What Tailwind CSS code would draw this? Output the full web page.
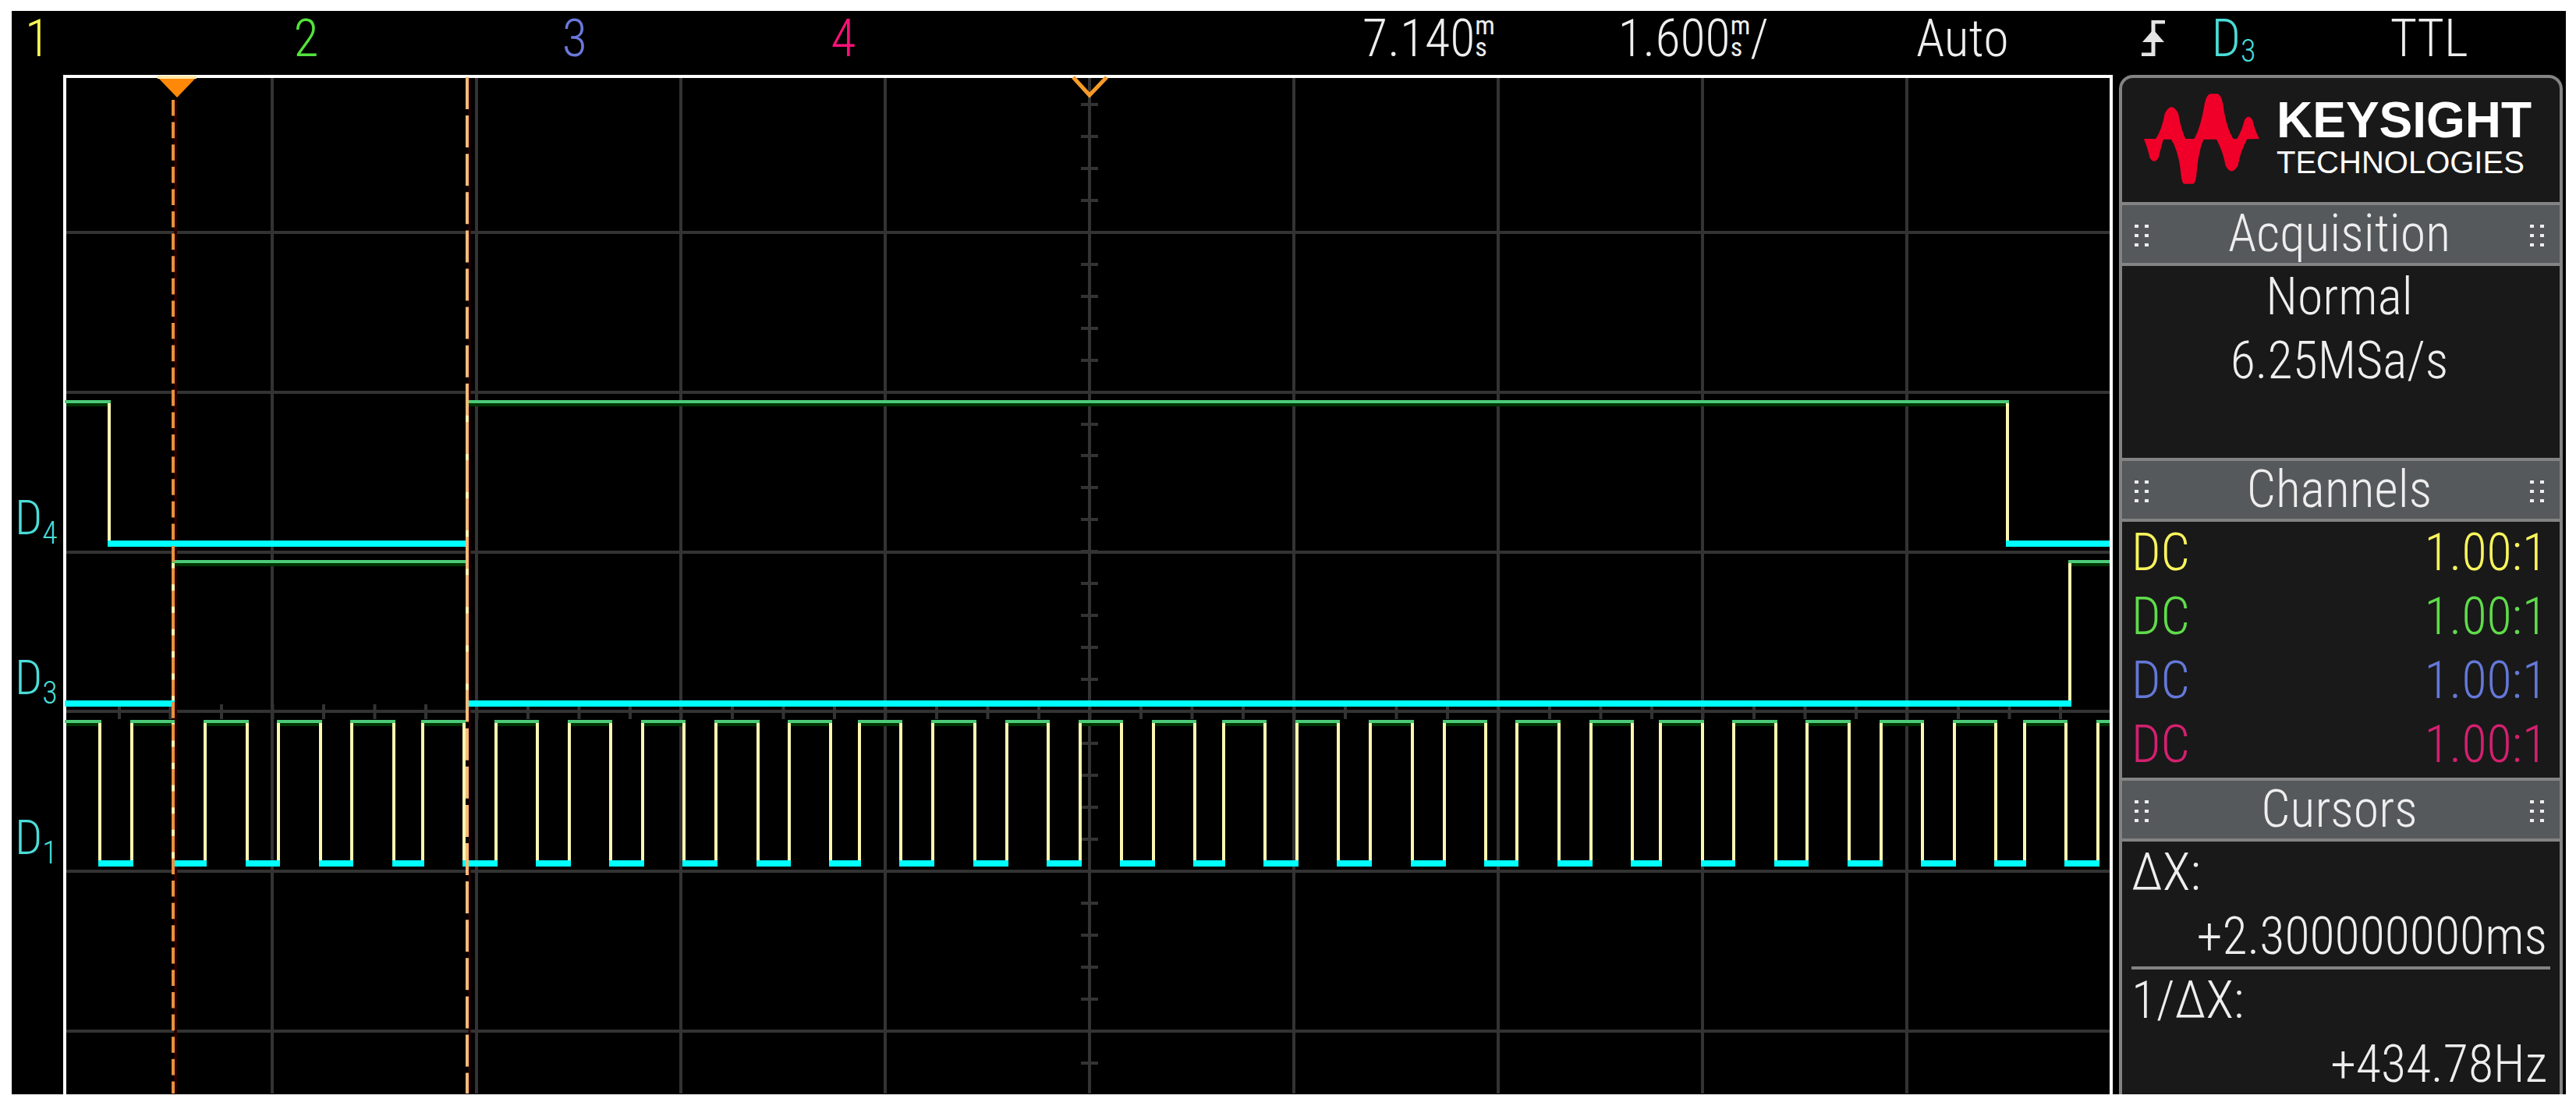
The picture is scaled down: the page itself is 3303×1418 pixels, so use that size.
<!DOCTYPE html>
<html lang="en">
  <head>
    <meta charset="UTF-8" />
    <meta name="viewport" content="width=device-width, initial-scale=1.0" />
    <title>Oscilloscope</title>
    <script src="https://cdn.jsdelivr.net/npm/@tailwindcss/browser@4"></script>
  </head>
  <body class="bg-white">
    <main
      class="min-h-screen flex flex-col pt-[14px] pb-4 pl-[15px] pr-[13px] font-['Roboto_Condensed','Liberation_Sans',sans-serif] font-light text-[66px] leading-[80px] text-[#eeeeee]"
    >
      <!-- Status bar -->
      <header
        class="h-[82px] bg-black pl-[17px] grid grid-cols-[344fr_344fr_344fr_681fr_327fr_382fr_289fr_89fr_229fr_225fr] items-start whitespace-nowrap leading-[72px]"
      >
        <span class="text-[#ffff54]">1</span>
        <span class="text-[#54e23c]">2</span>
        <span class="text-[#6a78dc]">3</span>
        <span class="text-[#ff1078]">4</span>
        <span class="flex">
          7.140
          <span class="flex flex-col pt-1 text-[34px] leading-[28px] font-normal">
            <span>m</span><span>s</span>
          </span>
        </span>
        <span class="flex">
          1.600
          <span class="flex flex-col pt-1 text-[34px] leading-[28px] font-normal">
            <span>m</span><span>s</span>
          </span>
          /
        </span>
        <span>Auto</span>
        <svg class="w-[30px] h-[46px] mt-3" viewBox="0 0 30 46" fill="none">
          <path d="M30 2H15V44H0" stroke="#e4e4e4" stroke-width="5" />
          <path d="M15 12L29 28H1z" fill="#e4e4e4" />
        </svg>
        <span class="flex text-[#4adcd8]">
          D<span class="text-[40px] pt-4">3</span>
        </span>
        <span>TTL</span>
      </header>

      <div class="flex-1 flex bg-black min-h-0">
        <!-- Digital channel labels -->
        <div
          class="w-[66px] pl-1 pt-[532px] text-[62px] leading-[72px] text-[#4adcd8]"
        >
          <div class="h-[205px] flex">
            D<span class="text-[40px] pt-5">4</span>
          </div>
          <div class="h-[205px] flex">
            D<span class="text-[40px] pt-5">3</span>
          </div>
          <div class="h-[100px] flex">
            D<span class="text-[40px] pt-5">1</span>
          </div>
        </div>

        <!-- Waveform display -->
        <div class="flex-1 border-4 border-b-0 border-white">
          <svg
            class="block w-full h-[1302px] overflow-visible"
            viewBox="85 100 2620 1302"
            preserveAspectRatio="none"
          >
            <g id="grid" stroke="#333333" stroke-width="4"></g>
            <path d="M225 128V1402" stroke="#2a0000" stroke-width="4" />
            <path d="M602 100V1402" stroke="#2a0000" stroke-width="3" />
            <g id="traces" fill="none"></g>

            <!-- Cursors -->
            <path
              d="M222 128V1402"
              stroke="#e8913f"
              stroke-width="4"
              stroke-dasharray="20.6 8"
            />
            <path
              d="M599 99V1402"
              stroke="#f4bb78"
              stroke-width="4"
              stroke-dasharray="41 8.1"
            />

            <!-- Trigger and time reference markers -->
            <path d="M202 97H252V101H202z" fill="#ffe9a8" />
            <path d="M204 101H250L227 125z" fill="#ff8808" />
            <path
              d="M1376 99L1397 122L1419 99"
              fill="none"
              stroke="#f79a28"
              stroke-width="5"
            />
          </svg>
        </div>

        <!-- Info panel -->
        <aside
          class="w-[569px] ml-2 mr-1 border-4 border-b-0 border-[#838383] rounded-t-[18px] bg-[#191919]"
        >
          <div class="h-[159px] flex items-start pl-7 pt-5 gap-[22px]">
            <svg
              class="w-[148px] h-[116px]"
              viewBox="175 88 372 348"
              preserveAspectRatio="none"
              fill="#f00028"
            >
              <path d="M175 262H238Q229 300 222 335Q208 362 194 335Q188 300 175 262z" />
              <path d="M212 264Q234 225 242 165Q264 115 286 165Q294 225 310 264z" />
              <path d="M262 262H368Q350 310 344 405Q340 432 334 435H304Q298 432 295 405Q288 310 262 262z" />
              <path d="M336 264Q358 220 370 130Q376 92 389 89H412Q424 92 430 130Q440 220 464 264z" />
              <path d="M408 262H508Q486 310 478 365Q457 408 438 365Q430 310 408 262z" />
              <path d="M474 264Q492 228 499 190Q512 164 525 190Q532 228 547 262z" />
            </svg>
            <div
              class="font-['Liberation_Sans',Arial,sans-serif] text-white whitespace-nowrap"
            >
              <p class="text-[64px] leading-[68px] font-bold">KEYSIGHT</p>
              <p class="text-[40px] leading-[40px] font-normal">TECHNOLOGIES</p>
            </div>
          </div>

          <section class="h-[328px]">
            <h2
              class="h-[82px] border-y-4 border-[#838383] bg-[#55595b] flex justify-between pl-4 pr-5 leading-[74px]"
            >
              <svg class="grip w-[18px] h-[29px] mt-[25px]" fill="#eeeeee"></svg>
              Acquisition
              <svg class="grip w-[18px] h-[29px] mt-[25px]" fill="#eeeeee"></svg>
            </h2>
            <p class="h-[82px] pr-1 text-center">Normal</p>
            <p class="h-[82px] pr-1 text-center">6.25MSa/s</p>
          </section>

          <section>
            <h2
              class="h-[82px] border-y-4 border-[#838383] bg-[#55595b] flex justify-between pl-4 pr-5 leading-[74px]"
            >
              <svg class="grip w-[18px] h-[29px] mt-[25px]" fill="#eeeeee"></svg>
              Channels
              <svg class="grip w-[18px] h-[29px] mt-[25px]" fill="#eeeeee"></svg>
            </h2>
            <table class="w-full">
              <tbody>
                <tr class="h-[82px] align-top text-[#f8f45c]">
                  <td class="pl-3">DC</td>
                  <td class="pr-4 text-right">1.00:1</td>
                </tr>
                <tr class="h-[82px] align-top text-[#5fdc4a]">
                  <td class="pl-3">DC</td>
                  <td class="pr-4 text-right">1.00:1</td>
                </tr>
                <tr class="h-[82px] align-top text-[#6478d8]">
                  <td class="pl-3">DC</td>
                  <td class="pr-4 text-right">1.00:1</td>
                </tr>
                <tr class="h-[82px] align-top text-[#d42070]">
                  <td class="pl-3">DC</td>
                  <td class="pr-4 text-right">1.00:1</td>
                </tr>
              </tbody>
            </table>
          </section>

          <section>
            <h2
              class="h-[82px] border-y-4 border-[#838383] bg-[#55595b] flex justify-between pl-4 pr-5 leading-[74px]"
            >
              <svg class="grip w-[18px] h-[29px] mt-[25px]" fill="#eeeeee"></svg>
              Cursors
              <svg class="grip w-[18px] h-[29px] mt-[25px]" fill="#eeeeee"></svg>
            </h2>
            <dl class="px-3">
              <dt class="h-[82px]">ΔX:</dt>
              <dd class="h-[82px] pr-1 border-b-4 border-[#838383] text-right">
                +2.300000000ms
              </dd>
              <dt class="h-[82px]">1/ΔX:</dt>
              <dd class="h-[78px] pr-1 text-right">+434.78Hz</dd>
            </dl>
          </section>
        </aside>
      </div>
    </main>

    <script>
      const LEFT = 85;
      const RIGHT = 2705;

      // Graticule: 10 x 8 divisions with ticks on the centre axes
      let grid = "";
      for (let i = 0; i < 9; i++) {
        const x = 349 + i * 262;
        grid += `M${x} 100V1402`;
      }
      for (let i = 0; i < 6; i++) {
        const y = 298 + Math.round(i * 204.8);
        grid += `M${LEFT} ${y}H${RIGHT}`;
      }
      for (let i = 0; i < 31; i++) {
        const y = 134 + Math.round(i * 40.95);
        grid += `M1386 ${y}H1408`;
      }
      for (let i = 0; i < 39; i++) {
        const x = 153 + i * 65.5;
        grid += `M${x} 903V922`;
      }
      document.getElementById("grid").innerHTML = `<path d="${grid}"/>`;

      // Each trace alternates between high and low at its edges
      const traces = [
        { high: 515, low: 697, start: 1, edges: [140, 599, 2574] },
        { high: 720, low: 902, start: 0, edges: [222, 599, 2654] },
        {
          high: 925,
          low: 1107,
          start: 1,
          edges: [
            128, 169, 222, 263, 317, 357, 411, 451, 505, 542, 595, 636, 689,
            730, 783, 824, 877, 918, 972, 1012, 1065, 1102, 1155, 1196, 1250,
            1291, 1344, 1385, 1438, 1479, 1532, 1569, 1622, 1663, 1716, 1757,
            1811, 1852, 1905, 1945, 1999, 2040, 2093, 2129, 2183, 2223, 2277,
            2317, 2371, 2412, 2465, 2506, 2559, 2596, 2649, 2690,
          ],
        },
      ];

      let highs = "";
      let shades = "";
      let lows = "";
      let verticals = "";
      for (const t of traces) {
        let x = LEFT;
        let level = t.start;
        for (const e of [...t.edges, RIGHT]) {
          const end = e === RIGHT ? e : e + 2;
          if (level) {
            highs += `M${x - 2} ${t.high}H${end}`;
            shades += `M${x} ${t.high + 4}H${e}`;
          } else {
            lows += `M${x - 2} ${t.low}H${end}`;
          }
          if (e !== RIGHT) verticals += `M${e} ${t.high + 2}V${t.low}`;
          x = e;
          level = 1 - level;
        }
      }
      document.getElementById("traces").innerHTML =
        `<path d="${shades}" stroke="#003300" stroke-width="4"/>` +
        `<path d="${verticals}" stroke="#fbf7b0" stroke-width="4"/>` +
        `<path d="${highs}" stroke="#4ccb78" stroke-width="4"/>` +
        `<path d="${lows}" stroke="#00ffff" stroke-width="8"/>`;

      // Drag handles in the section headings
      document.querySelectorAll(".grip").forEach((g) => {
        let dots = "";
        for (const y of [0, 12, 24]) {
          dots += `<rect y="${y}" width="5" height="4"/><rect x="13" y="${y}" width="5" height="4"/>`;
        }
        g.innerHTML = dots;
      });
    </script>
  </body>
</html>
